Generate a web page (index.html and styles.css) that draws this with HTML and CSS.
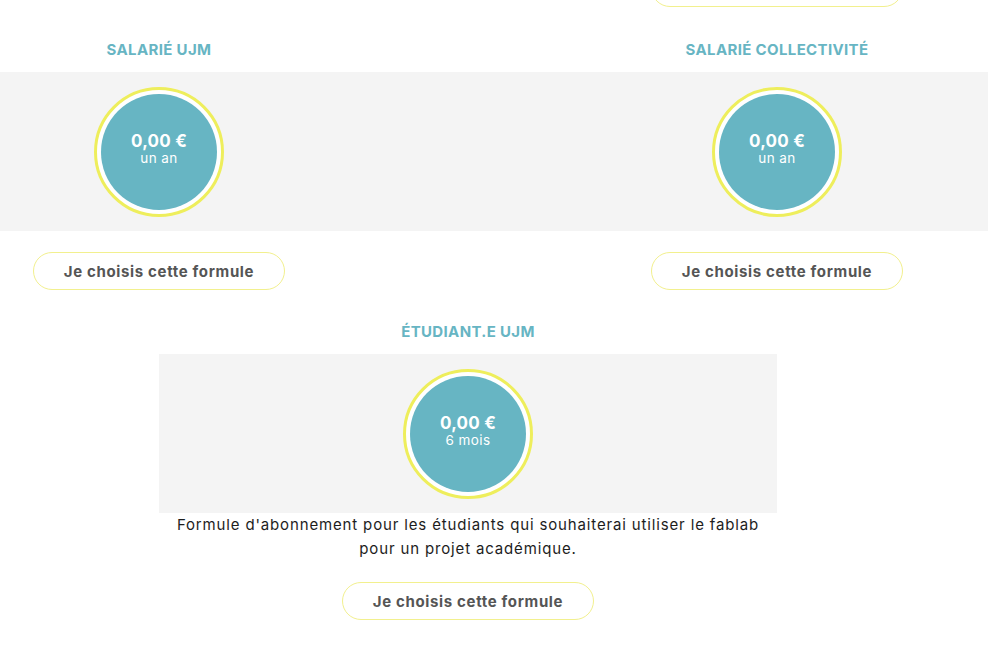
FILE: index.html
```html
<!DOCTYPE html>
<html lang="fr">
<head>
<meta charset="utf-8">
<title>Formules</title>
<link rel="stylesheet" href="styles.css">
</head>
<body>
<main class="plans">
  <div class="cells prev">
    <span></span><span></span>
    <div class="cell"><a class="choose" href="#">Je choisis cette formule</a></div>
  </div>

  <section class="pair">
    <div class="cells titles">
      <h3 class="plan-title">SALARIÉ UJM</h3>
      <span></span>
      <h3 class="plan-title">SALARIÉ COLLECTIVITÉ</h3>
    </div>
    <div class="band">
      <div class="cells">
        <div class="cell">
          <div class="ring"><div class="disc"><strong class="price">0,00 €</strong><span class="period">un an</span></div></div>
        </div>
        <span></span>
        <div class="cell">
          <div class="ring"><div class="disc"><strong class="price">0,00 €</strong><span class="period">un an</span></div></div>
        </div>
      </div>
    </div>
    <div class="cells actions">
      <div class="cell"><a class="choose" href="#">Je choisis cette formule</a></div>
      <span></span>
      <div class="cell"><a class="choose" href="#">Je choisis cette formule</a></div>
    </div>
  </section>

  <section class="single">
    <h3 class="plan-title">ÉTUDIANT.E UJM</h3>
    <div class="single-body">
      <div class="ring"><div class="disc"><strong class="price">0,00 €</strong><span class="period">6 mois</span></div></div>
    </div>
    <p class="desc">Formule d'abonnement pour les étudiants qui souhaiterai utiliser le fablab pour un projet académique.</p>
    <div class="cell"><a class="choose" href="#">Je choisis cette formule</a></div>
  </section>
</main>
</body>
</html>
```

FILE: styles.css
```css
* { box-sizing: border-box; }
html, body { margin: 0; padding: 0; background: #fff; }
body {
  font-family: "Inter", "Open Sans", "Liberation Sans", sans-serif;
  color: #1d1d1d;
  width: 988px;
  height: 653px;
  overflow: hidden;
}
.plans { width: 988px; }

.cells {
  display: grid;
  grid-template-columns: 318px 300px 318px;
}
.cell { display: flex; justify-content: center; }

.prev { margin-top: -31px; margin-bottom: 31px; }

.plan-title {
  margin: 0;
  padding-top: 1px;
  font-size: 15px;
  line-height: 22px;
  font-weight: 700;
  color: #67b5c3;
  text-align: center;
  letter-spacing: 0.35px;
}
.titles { margin-bottom: 11px; }

.band {
  background: #f4f4f4;
  padding: 15px 0 14px;
}
.ring {
  width: 130px;
  height: 130px;
  border-radius: 50%;
  border: 3px solid #eeee5c;
  background: #fff;
  padding: 4px;
}
.disc {
  width: 116px;
  height: 116px;
  border-radius: 50%;
  background: #67b5c3;
  color: #fff;
  display: flex;
  flex-direction: column;
  align-items: center;
  justify-content: center;
  padding-bottom: 6px;
}
.price { font-size: 17px; line-height: 18px; font-weight: 700; letter-spacing: 0.2px; }
.period { font-size: 13.5px; line-height: 16px; letter-spacing: 0.45px; }

.actions { margin-top: 21px; margin-bottom: 30px; }
.choose {
  display: flex;
  align-items: center;
  justify-content: center;
  width: 252px;
  height: 38px;
  border: 1px solid #f2f08e;
  border-radius: 19px;
  color: #555;
  font-size: 15px;
  font-weight: 700;
  letter-spacing: 0.65px;
  text-decoration: none;
  background: #fff;
}

.single {
  width: 618px;
  margin-left: 159px;
}
.single .plan-title { margin-bottom: 11px; }
.single-body {
  background: #f4f4f4;
  padding: 15px 0 14px;
  display: flex;
  justify-content: center;
}
.desc {
  margin: 0 0 21px;
  font-size: 15px;
  line-height: 24px;
  letter-spacing: 0.85px;
  text-align: center;
  color: #1d1d1d;
}
```
